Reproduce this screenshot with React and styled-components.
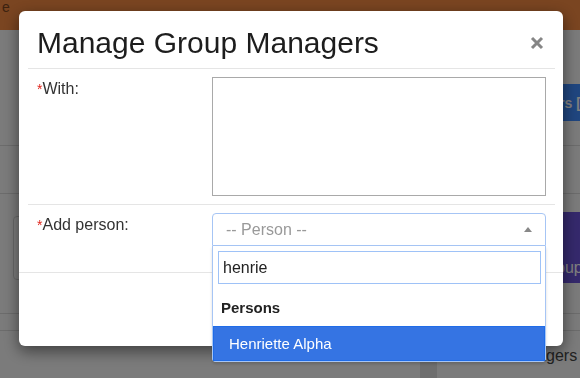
import React from "react";
import styled, { createGlobalStyle } from "styled-components";

const GlobalStyle = createGlobalStyle`
  html, body {
    margin: 0;
    padding: 0;
  }
  body {
    width: 580px;
    height: 378px;
    overflow: hidden;
    font-family: "Liberation Sans", Helvetica, Arial, sans-serif;
    background: #f6f6f6;
  }
  * {
    box-sizing: border-box;
  }
`;

/* ---------- page behind the dialog ---------- */

const Page = styled.div`
  width: 580px;
  height: 378px;
  overflow: hidden;
  background: #f6f6f6;
  color: #444;
`;

const NavBar = styled.header`
  height: 30px;
  background: #f48a42;
  color: #7a4420;
  font-size: 14px;
  line-height: 14px;
  padding-left: 2px;
`;

const Toolbar = styled.div`
  height: 116px;
  padding-top: 54px;
  display: grid;
  grid-template-columns: 495px max-content;
  border-bottom: 1px solid #d8d8d8;
`;

const PageButton = styled.button`
  grid-column: 2;
  height: ${(p) => p.$height}px;
  margin-top: ${(p) => p.$top || 0}px;
  padding: ${(p) => p.$padding};
  border: 0;
  border-radius: 4px;
  background: ${(p) => p.$bg};
  color: #fff;
  font-family: inherit;
  font-size: ${(p) => p.$size}px;
  font-weight: ${(p) => p.$weight};
  line-height: 20px;
  text-align: left;
  white-space: nowrap;
`;

const Strip = styled.div`
  height: ${(p) => p.$height}px;
  border-bottom: 1px solid #d8d8d8;
`;

const Section = styled.div`
  height: 120px;
  padding-left: 13px;
  display: grid;
  grid-template-columns: 451px max-content;
  align-items: start;
  border-bottom: 1px solid #d8d8d8;
`;

const Panel = styled.div`
  margin-top: 22px;
  height: 64px;
  border: 1px solid #d2d2d2;
  border-radius: 4px;
  background: #fafafa;
`;

const Table = styled.div`
  display: grid;
  grid-template-columns: 420px 17px 1fr;
  height: 60px;
`;

const Cell = styled.div`
  padding: 15px 0 0;
  font-size: 16px;
  line-height: 20px;
  color: #444;
  text-align: ${(p) => p.$align || "left"};
  padding-right: ${(p) => p.$pr || 0}px;
  padding-left: ${(p) => p.$pl || 0}px;
  white-space: nowrap;
`;

const Divider = styled.div`
  background: #dcdcdc;
`;

/* ---------- dialog ---------- */

const Backdrop = styled.div`
  position: fixed;
  inset: 0;
  background: rgba(0, 0, 0, 0.5);
`;

const DialogLayer = styled.div`
  position: fixed;
  inset: 0;
  padding: 11px 17px 0 19px;
`;

const Dialog = styled.div`
  width: 544px;
  height: 335px;
  background: #fff;
  border-radius: 6px;
  box-shadow: 0 5px 15px rgba(0, 0, 0, 0.5);
  display: flex;
  flex-direction: column;
`;

const Header = styled.div`
  margin: 0 8px 0 9px;
  padding: 14px 9px 7px;
  border-bottom: 1px solid #e5e5e5;
  display: flex;
  align-items: center;
  justify-content: space-between;
`;

const Title = styled.h4`
  margin: 0;
  font-size: 30px;
  line-height: 36px;
  font-weight: 400;
  color: #1d1d1d;
`;

const CloseButton = styled.button`
  width: 14px;
  height: 14px;
  margin-right: 2px;
  padding: 0;
  border: 0;
  background: none;
  display: flex;
  cursor: pointer;
`;

const Body = styled.div`
  margin: 0 8px 0 9px;
  padding-bottom: 18px;
`;

const FormRow = styled.div`
  display: grid;
  grid-template-columns: 175px 1fr;
  padding: 8px 9px;
  border-bottom: ${(p) => (p.$divider ? "1px solid #e5e5e5" : "0")};
`;

const Label = styled.label`
  margin-top: 2px;
  font-size: 16px;
  line-height: 20px;
  color: #333;
`;

const Required = styled.span`
  color: #e0251b;
  font-size: 14px;
`;

const TextArea = styled.textarea`
  display: block;
  width: 100%;
  height: 119px;
  margin: 0;
  border: 1px solid #a9a9a9;
  border-radius: 0;
  resize: none;
  font-family: inherit;
  font-size: 14px;
  outline: none;
`;

const Combo = styled.div`
  position: relative;
`;

const SelectBox = styled.div`
  height: 33px;
  padding: 0 13px;
  border: 1px solid #a6c5f5;
  border-radius: 4px 4px 0 0;
  display: flex;
  align-items: center;
  justify-content: space-between;
  font-size: 16px;
  color: #999;
`;

const Arrow = styled.span`
  width: 0;
  height: 0;
  border-left: 4px solid transparent;
  border-right: 4px solid transparent;
  border-bottom: 5px solid #888;
`;

const Dropdown = styled.div`
  position: absolute;
  top: 100%;
  left: 0;
  right: 0;
  z-index: 2;
  background: #fff;
  border: 1px solid #a6c5f5;
  border-top: 0;
  border-radius: 0 0 4px 4px;
  box-shadow: 0 2px 3px rgba(0, 0, 0, 0.15);
`;

const SearchWrap = styled.div`
  padding: 5px 4px 4px 5px;
`;

const Search = styled.input`
  display: block;
  width: 100%;
  height: 33px;
  margin: 0;
  padding: 0 4px;
  border: 1px solid #9ec2f7;
  font-family: inherit;
  font-size: 16px;
  color: #222;
  outline: none;
`;

const GroupLabel = styled.div`
  padding: 11px 8px 9px;
  font-size: 15px;
  line-height: 18px;
  font-weight: 700;
  color: #222;
`;

const Option = styled.div`
  padding: 8px 15px 7px;
  border: 1px solid #1f6ce8;
  background: ${(p) => (p.$active ? "#3574e3" : "#fff")};
  color: ${(p) => (p.$active ? "#fff" : "#222")};
  font-size: 15px;
  line-height: 18px;
`;

const Footer = styled.div`
  flex: 1;
  border-top: 1px solid #e5e5e5;
  padding: 17px;
  display: flex;
  justify-content: flex-end;
  align-items: flex-start;
  gap: 6px;
`;

const FooterButton = styled.button`
  height: 34px;
  padding: 0 12px;
  border: 1px solid ${(p) => (p.$primary ? "#2e6da4" : "#ccc")};
  border-radius: 4px;
  background: ${(p) => (p.$primary ? "#337ab7" : "#fff")};
  color: ${(p) => (p.$primary ? "#fff" : "#333")};
  font-family: inherit;
  font-size: 14px;
`;

const CloseIcon = () => (
  <svg width="14" height="14" viewBox="0 0 14 14">
    <path d="M2 2 L12 12 M12 2 L2 12" stroke="#868686" strokeWidth="3" />
  </svg>
);

const App = () => (
  <>
    <GlobalStyle />
    <Page>
      <NavBar>e</NavBar>
      <Toolbar>
        <PageButton $bg="#3f8cff" $height={37} $padding="0 12px" $size={14} $weight={700}>
          Managers [2]
        </PageButton>
      </Toolbar>
      <Strip $height={48} />
      <Section>
        <Panel />
        <PageButton
          $bg="#6a52d8"
          $height={71}
          $top={18}
          $padding="46px 12px 5px"
          $size={16}
          $weight={400}
        >
          Manage Group
        </PageButton>
      </Section>
      <Strip $height={17} />
      <Table>
        <Cell $align="right" $pr={27}>-</Cell>
        <Divider />
        <Cell $pl={69}>Managers</Cell>
      </Table>
    </Page>

    <Backdrop />
    <DialogLayer>
      <Dialog>
        <Header>
          <Title>Manage Group Managers</Title>
          <CloseButton aria-label="Close">
            <CloseIcon />
          </CloseButton>
        </Header>
        <Body>
          <FormRow $divider>
            <Label>
              <Required>*</Required>With:
            </Label>
            <TextArea />
          </FormRow>
          <FormRow>
            <Label>
              <Required>*</Required>Add person:
            </Label>
            <Combo>
              <SelectBox>
                <span>-- Person --</span>
                <Arrow />
              </SelectBox>
              <Dropdown>
                <SearchWrap>
                  <Search defaultValue="henrie" />
                </SearchWrap>
                <GroupLabel>Persons</GroupLabel>
                <Option $active>Henriette Alpha</Option>
              </Dropdown>
            </Combo>
          </FormRow>
        </Body>
        <Footer>
          <FooterButton>Close</FooterButton>
          <FooterButton $primary>Save</FooterButton>
        </Footer>
      </Dialog>
    </DialogLayer>
  </>
);

export default App;
